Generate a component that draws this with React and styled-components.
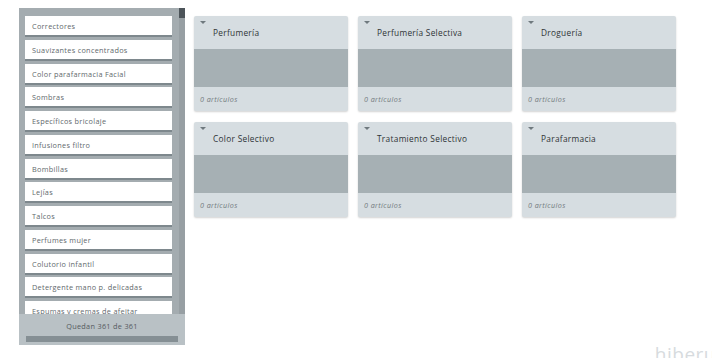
import React from "react";
import styled, { createGlobalStyle } from "styled-components";

const GlobalStyle = createGlobalStyle`
  html, body {
    margin: 0;
    padding: 0;
    background: #fff;
    font-family: "Open Sans", Lato, "Liberation Sans", sans-serif;
  }
`;

const Page = styled.div`
  position: relative;
  width: 712px;
  height: 358px;
  overflow: hidden;
  display: flex;
  align-items: flex-start;
  padding: 8px 0 0 19px;
  box-sizing: border-box;
  gap: 9px;
`;

const Sidebar = styled.div`
  width: 166px;
  height: 337px;
  background: #a4acb0;
  display: flex;
  flex-direction: column;
`;

const ListArea = styled.div`
  flex: 1;
  display: flex;
  overflow: hidden;
`;

const List = styled.ul`
  list-style: none;
  margin: 0;
  padding: 8px 0 0 6px;
  width: 147px;
  display: flex;
  flex-direction: column;
  gap: 2.75px;
`;

const Item = styled.li`
  height: 21px;
  flex-shrink: 0;
  background: #fff;
  border-bottom: 2px solid #7e888d;
  box-sizing: border-box;
  display: flex;
  align-items: center;
  padding: 1px 0 0 7px;
  font-size: 7.3px;
  letter-spacing: 0.3px;
  color: #61686c;
  white-space: nowrap;
`;

const ScrollTrack = styled.div`
  margin-left: 7px;
  width: 6px;
  background: #979fa3;
`;

const ScrollThumb = styled.div`
  height: 10px;
  background: #4c5459;
`;

const Footer = styled.div`
  height: 31px;
  background: #b9c1c5;
  display: flex;
  flex-direction: column;
  align-items: center;
  padding-top: 7px;
  box-sizing: border-box;
  font-size: 7.3px;
  letter-spacing: 0.3px;
  line-height: 10px;
  color: #555b5f;
`;

const FooterBar = styled.div`
  margin-top: 5px;
  width: 152px;
  height: 6px;
  background: #858f94;
`;

const Grid = styled.div`
  margin-top: 8px;
  display: grid;
  grid-template-columns: repeat(3, 154px);
  column-gap: 10px;
  row-gap: 11px;
`;

const Card = styled.div`
  height: 95px;
  background: #d6dde1;
  border-radius: 2px;
  box-shadow: 0 1px 2px rgba(0, 0, 0, 0.18);
  display: flex;
  flex-direction: column;
  overflow: hidden;
`;

const CardHeader = styled.div`
  position: relative;
  height: 33px;
  display: flex;
  align-items: center;
  padding: 0 0 0 19px;
  box-sizing: border-box;
  font-size: 8.3px;
  letter-spacing: 0.3px;
  color: #2e3336;
`;

const Caret = styled.span`
  position: absolute;
  left: 6px;
  top: 5px;
  width: 0;
  height: 0;
  border-left: 3px solid transparent;
  border-right: 3px solid transparent;
  border-top: 3px solid #6f797e;
`;

const CardBody = styled.div`
  height: 38px;
  background: #a6b0b4;
`;

const CardFooter = styled.div`
  flex: 1;
  display: flex;
  align-items: center;
  padding-left: 6px;
  font-size: 7.2px;
  letter-spacing: 0.4px;
  font-style: italic;
  color: #737b80;
`;

const Logo = styled.div`
  position: absolute;
  right: -4px;
  bottom: -9px;
  font-size: 19px;
  color: #d7dbde;
  letter-spacing: 0.5px;
`;

const items = [
  "Correctores",
  "Suavizantes concentrados",
  "Color parafarmacia Facial",
  "Sombras",
  "Específicos bricolaje",
  "Infusiones filtro",
  "Bombillas",
  "Lejías",
  "Talcos",
  "Perfumes mujer",
  "Colutorio infantil",
  "Detergente mano p. delicadas",
  "Espumas y cremas de afeitar",
];

const cards = [
  "Perfumería",
  "Perfumería Selectiva",
  "Droguería",
  "Color Selectivo",
  "Tratamiento Selectivo",
  "Parafarmacia",
];

export default function App() {
  return (
    <>
      <GlobalStyle />
      <Page>
        <Sidebar>
          <ListArea>
            <List>
              {items.map((it) => (
                <Item key={it}>{it}</Item>
              ))}
            </List>
            <ScrollTrack>
              <ScrollThumb />
            </ScrollTrack>
          </ListArea>
          <Footer>
            Quedan 361 de 361
            <FooterBar />
          </Footer>
        </Sidebar>
        <Grid>
          {cards.map((c) => (
            <Card key={c}>
              <CardHeader>
                <Caret />
                {c}
              </CardHeader>
              <CardBody />
              <CardFooter>0 artículos</CardFooter>
            </Card>
          ))}
        </Grid>
        <Logo>hiberu</Logo>
      </Page>
    </>
  );
}
